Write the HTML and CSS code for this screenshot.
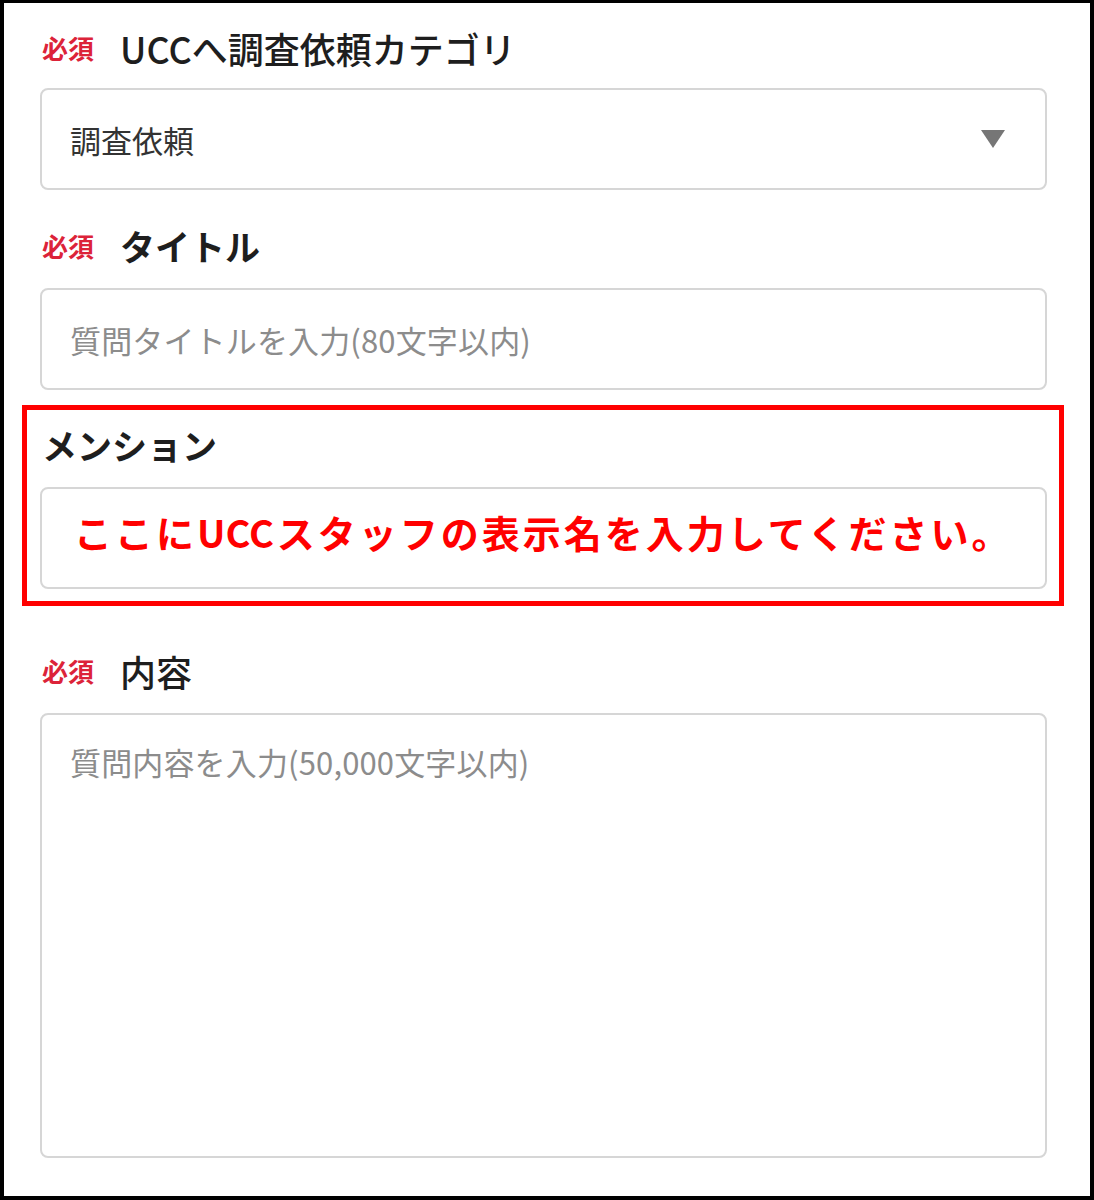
FILE: index.html
```html
<!DOCTYPE html>
<html lang="ja">
<head>
    <meta charset="UTF-8">
    <meta name="viewport" content="width=device-width, initial-scale=1.0">
    <title>UCCへ調査依頼</title>
    <link rel="stylesheet" href="styles.css">
</head>
<body>
    <div class="frame">
        <div class="field first">
            <div class="field-label"><span class="required">必須</span>UCCへ調査依頼カテゴリ</div>
            <div class="control select-box">
                <span class="value">調査依頼</span>
                <svg class="arrow" width="24" height="18" viewBox="0 0 24 18"><path d="M0 0 H24 L12 18 Z" fill="#767676"/></svg>
            </div>
        </div>

        <div class="field">
            <div class="field-label strong"><span class="required">必須</span>タイトル</div>
            <div class="control">
                <span class="placeholder">質問タイトルを入力(80文字以内)</span>
            </div>
        </div>

        <div class="highlight">
            <div class="field-label strong plain">メンション</div>
            <div class="control mention">
                <span class="annotation">ここに<span class="latin">UCC</span>スタッフの表示名を入力してください。</span>
            </div>
        </div>

        <div class="field content">
            <div class="field-label"><span class="required">必須</span>内容</div>
            <div class="control textarea">
                <span class="placeholder">質問内容を入力(50,000文字以内)</span>
            </div>
        </div>
    </div>
</body>
</html>
```

FILE: styles.css
```css
html, body {
    margin: 0;
    height: 100%;
    background-color: #fff;
}
body {
    font-family: "Noto Sans CJK JP", "Noto Sans", sans-serif;
    color: #222;
}
.frame {
    box-sizing: border-box;
    width: 1094px;
    height: 1200px;
    border: 4px solid #000;
    border-top-width: 3px;
    padding: 0 43px 0 36px;
}
.field {
    margin-top: 36px;
}
.field.first {
    margin-top: 25px;
}
.field.content {
    margin-top: 45px;
}
.field-label {
    display: flex;
    align-items: center;
    height: 40px;
    margin-bottom: 22px;
    font-size: 36px;
    font-weight: 500;
    line-height: 40px;
    color: #1e1e1e;
}
.field-label.strong {
    font-size: 35px;
    font-weight: 700;
}
.field.first .field-label {
    margin-bottom: 20px;
}
.field-label.plain {
    padding-left: 2px;
}
.required {
    width: 80px;
    padding-left: 2px;
    box-sizing: border-box;
    font-size: 26px;
    font-weight: 700;
    color: #dc2339;
}
.control {
    box-sizing: border-box;
    height: 102px;
    border: 2px solid #d6d6d6;
    border-radius: 8px;
    padding: 0 28px;
    display: flex;
    align-items: center;
    font-size: 31px;
}
.select-box {
    justify-content: space-between;
    padding-right: 40px;
}
.value {
    color: #333;
}
.placeholder {
    color: #8c8c8c;
    letter-spacing: 0.15px;
}
.textarea {
    height: 445px;
    align-items: flex-start;
    padding-top: 24px;
}
.highlight {
    margin: 15px -17px 0 -18px;
    border: 5px solid #f00;
    padding: 15px 12px 12px 13px;
}
.highlight .field-label {
    margin-bottom: 22px;
}
.mention {
    padding-bottom: 14px;
}
.annotation {
    padding-left: 4px;
    font-size: 38px;
    font-weight: 700;
    letter-spacing: 3px;
    color: #f00;
}
.annotation .latin {
    letter-spacing: 0;
    margin-right: 3px;
}
```
